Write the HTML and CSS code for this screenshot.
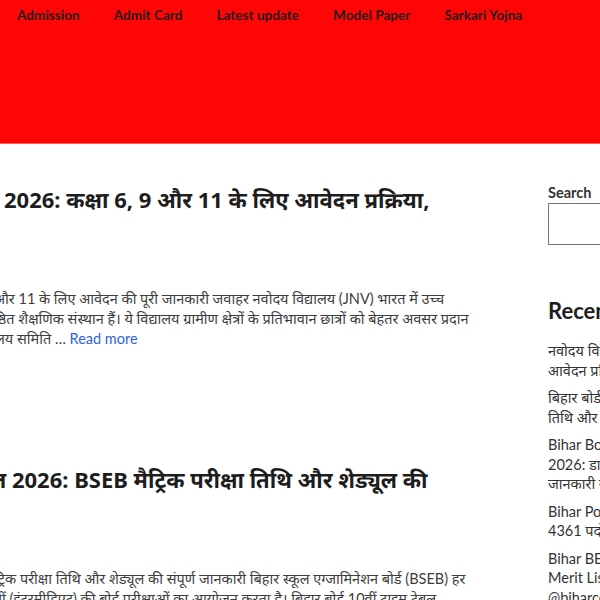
FILE: index.html
```html
<!DOCTYPE html>
<html lang="hi">
<head>
<meta charset="utf-8">
<link rel="stylesheet" href="styles.css">
</head>
<body>
<header class="site-header">
  <nav class="nav">
    <a class="nav-item">Admission</a>
    <a class="nav-item">Admit Card</a>
    <a class="nav-item">Latest update</a>
    <a class="nav-item">Model Paper</a>
    <a class="nav-item">Sarkari Yojna</a>
  </nav>
</header>
<div class="content">
  <main class="main">
    <article class="post">
      <h2 class="post-title">2026: कक्षा 6, 9 और 11 के लिए आवेदन प्रक्रिया,</h2>
      <div class="excerpt">
        <div class="line cut">और 11 के लिए आवेदन की पूरी जानकारी जवाहर नवोदय विद्यालय (JNV) भारत में उच्च</div>
        <div class="line cut">ष्ठित शैक्षणिक संस्थान हैं। ये विद्यालय ग्रामीण क्षेत्रों के प्रतिभावान छात्रों को बेहतर अवसर प्रदान</div>
        <div class="line cut2">लय समिति … <a class="more">Read more</a></div>
      </div>
    </article>
    <article class="post">
      <h2 class="post-title cut-title">ल 2026: BSEB मैट्रिक परीक्षा तिथि और शेड्यूल की</h2>
      <div class="excerpt">
        <div class="line cut">ट्रिक परीक्षा तिथि और शेड्यूल की संपूर्ण जानकारी बिहार स्कूल एग्जामिनेशन बोर्ड (BSEB) हर</div>
        <div class="line cut">वीं (इंटरमीडिएट) की बोर्ड परीक्षाओं का आयोजन करता है। बिहार बोर्ड 10वीं टाइम टेबल</div>
      </div>
    </article>
  </main>
  <aside class="sidebar">
    <label class="search-label">Search</label>
    <div class="search-box"></div>
    <h2 class="widget-title">Recent Posts</h2>
    <ul class="recent">
      <li>नवोदय विद्यालय प्रवेश 2026: कक्षा 6, 9 और 11 के लिए<br>आवेदन प्रक्रिया</li>
      <li>बिहार बोर्ड 10वीं टाइम टेबल 2026: BSEB मैट्रिक परीक्षा<br>तिथि और शेड्यूल</li>
      <li>Bihar Board Dummy Admit Card<br>2026: डाउनलोड करने का तरीका और पूरी<br>जानकारी यहाँ</li>
      <li>Bihar Police Constable Vacancy 2026:<br>4361 पदों पर भर्ती</li>
      <li>Bihar BEd Counselling 2026<br>Merit List जारी, यहाँ देखें<br>@biharcetbed</li>
    </ul>
  </aside>
</div>
</body>
</html>
```
FILE: styles.css
```css
html, body {
  margin: 0;
  padding: 0;
  background: #ffffff;
  overflow: hidden;
  width: 600px;
  height: 600px;
}
body {
  font-family: "Lato", "Noto Sans", sans-serif;
  color: #333;
}
.site-header {
  background: #ff0606;
  height: 144px;
  border-bottom: 1px solid #ff5a5a;
  box-sizing: border-box;
}
.nav {
  display: flex;
  padding-left: 17px;
  padding-top: 5px;
  white-space: nowrap;
}
.nav-item {
  font-size: 13.6px;
  font-weight: 700;
  color: #2a1a1a;
  line-height: 20px;
  margin-right: 34px;
}
.content {
  display: flex;
  white-space: nowrap;
}
.main {
  width: 548px;
  flex: none;
  overflow: hidden;
}
.post {
  margin-left: -4px;
}
.post-title {
  margin: 0;
  padding-top: 40px;
  font-family: "Noto Sans", sans-serif;
  font-size: 22px;
  font-weight: 700;
  line-height: 30px;
  color: #1d1d1d;
  padding-left: 8px;
}
.cut-title {
  padding-left: 0;
  margin-left: -6px;
}
.excerpt {
  margin-top: 75px;
  font-family: "Lato", "Noto Sans", sans-serif;
  font-size: 14.5px;
  line-height: 20px;
  color: #3d3d3d;
}
.post + .post {
  margin-top: 115px;
}
.post + .post .post-title {
  padding-top: 0;
}
.line {
  white-space: nowrap;
}
.cut {
  margin-left: -2px;
}
.cut2 {
  margin-left: -1px;
}
.more {
  color: #2f63d6;
}
.sidebar {
  flex: none;
  width: 300px;
  padding-top: 40px;
}
.search-label {
  display: block;
  font-size: 14.5px;
  font-weight: 700;
  color: #333;
  line-height: 18px;
}
.search-box {
  margin-top: 1px;
  height: 42px;
  border: 1px solid #767676;
  border-right: none;
  box-sizing: border-box;
}
.widget-title {
  margin: 52px 0 0;
  font-size: 22px;
  font-weight: 700;
  color: #1d1d1d;
  line-height: 28px;
}
.recent {
  list-style: none;
  margin: 16px 0 0;
  padding: 0;
  white-space: nowrap;
  font-size: 14.5px;
  line-height: 19.5px;
  color: #333;
}
.recent li {
  margin-bottom: 8px;
}
```
